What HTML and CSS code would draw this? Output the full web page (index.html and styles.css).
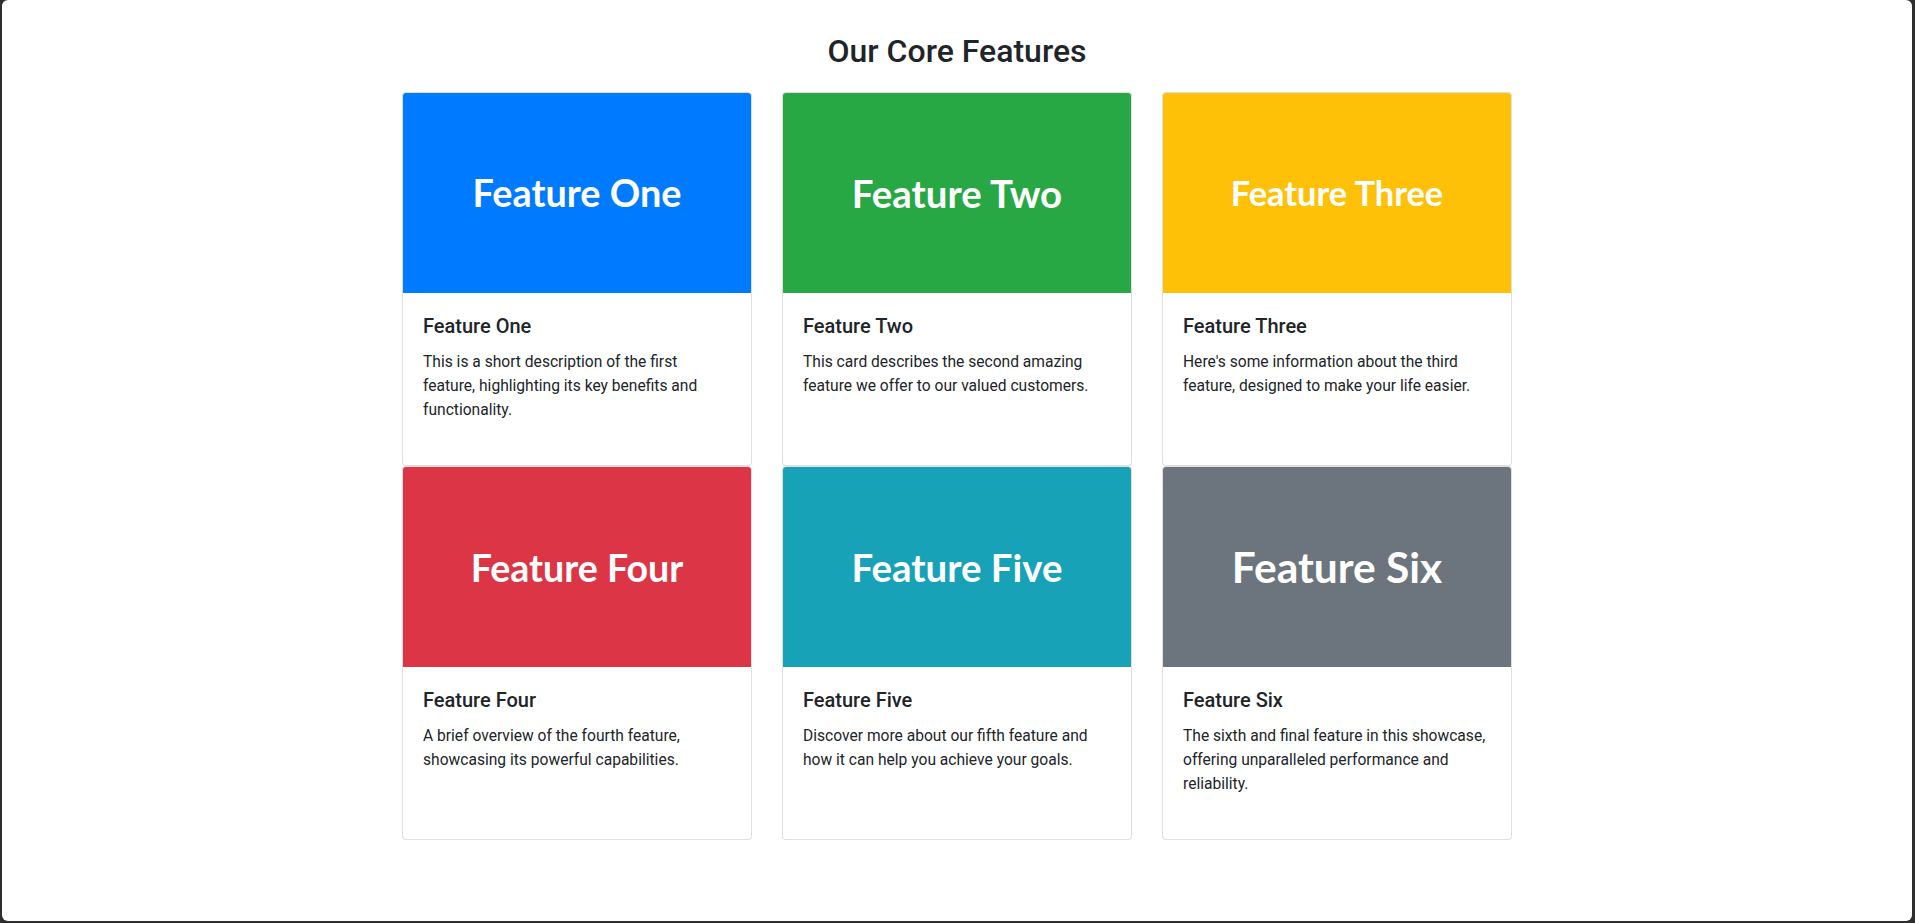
FILE: index.html
```html
<!DOCTYPE html>
<html lang="en">
<head>
<meta charset="utf-8">
<title>Our Core Features</title>
<link rel="stylesheet" href="styles.css">
</head>
<body>
<div class="frame">
  <main class="container">
    <h2 class="page-title">Our Core Features</h2>
    <div class="grid">
      <div class="card">
        <div class="card-img bg-blue"><span class="img-text" style="font-size:37.8px">Feature One</span></div>
        <div class="card-body">
          <h5 class="card-title">Feature One</h5>
          <p class="card-text">This is a short description of the first feature, highlighting its key benefits and functionality.</p>
        </div>
      </div>
      <div class="card">
        <div class="card-img bg-green"><span class="img-text" style="font-size:38.4px">Feature Two</span></div>
        <div class="card-body">
          <h5 class="card-title">Feature Two</h5>
          <p class="card-text">This card describes the second amazing feature we offer to our valued customers.</p>
        </div>
      </div>
      <div class="card">
        <div class="card-img bg-yellow"><span class="img-text" style="font-size:34.4px">Feature Three</span></div>
        <div class="card-body">
          <h5 class="card-title">Feature Three</h5>
          <p class="card-text">Here's some information about the third feature, designed to make your life easier.</p>
        </div>
      </div>
      <div class="card">
        <div class="card-img bg-red"><span class="img-text" style="font-size:37.6px">Feature Four</span></div>
        <div class="card-body">
          <h5 class="card-title">Feature Four</h5>
          <p class="card-text">A brief overview of the fourth feature, showcasing its powerful capabilities.</p>
        </div>
      </div>
      <div class="card">
        <div class="card-img bg-teal"><span class="img-text" style="font-size:38.4px">Feature Five</span></div>
        <div class="card-body">
          <h5 class="card-title">Feature Five</h5>
          <p class="card-text">Discover more about our fifth feature and how it can help you achieve your goals.</p>
        </div>
      </div>
      <div class="card">
        <div class="card-img bg-gray"><span class="img-text" style="font-size:42.5px">Feature Six</span></div>
        <div class="card-body">
          <h5 class="card-title">Feature Six</h5>
          <p class="card-text">The sixth and final feature in this showcase, offering unparalleled performance and reliability.</p>
        </div>
      </div>
    </div>
  </main>
</div>
</body>
</html>
```
FILE: styles.css
```css
html {
  height: 100%;
  background: #2e2e2e;
}
body {
  margin: 0;
  height: 100vh;
  padding: 0 3px 2px 2px;
  box-sizing: border-box;
  font-family: Roboto, "Noto Sans", sans-serif;
  color: #212529;
  font-size: 16px;
  line-height: 1.5;
}
.frame {
  height: 100%;
  background: #fff;
  border-radius: 6px;
  overflow: hidden;
}
.container {
  width: 1110px;
  margin: 0 auto;
  padding-top: 32px;
}
.page-title {
  margin: 0 0 22px;
  text-align: center;
  font-size: 32px;
  font-weight: 500;
  line-height: 1.2;
}
.grid {
  display: grid;
  grid-template-columns: repeat(3, 350px);
  column-gap: 30px;
  row-gap: 0;
}
.card {
  height: 374px;
  box-sizing: border-box;
  border: 1px solid rgba(0, 0, 0, 0.125);
  border-radius: 4px;
  background: #fff;
  display: flex;
  flex-direction: column;
}
.card-img {
  height: 200px;
  border-radius: 3px 3px 0 0;
  display: flex;
  align-items: center;
  justify-content: center;
}
.img-text {
  color: #fff;
  font-family: Lato, "Open Sans", sans-serif;
  font-weight: 700;
  line-height: 1;
}
.bg-blue { background: #007bff; }
.bg-green { background: #28a745; }
.bg-yellow { background: #ffc107; }
.bg-red { background: #dc3545; }
.bg-teal { background: #17a2b8; }
.bg-gray { background: #6c757d; }
.card-body {
  padding: 21px 20px 20px;
}
.card-title {
  margin: 0 0 12px;
  font-size: 20px;
  font-weight: 500;
  line-height: 1.2;
}
.card-text {
  margin: 0;
  font-size: 15.6px;
  line-height: 24px;
}
```
